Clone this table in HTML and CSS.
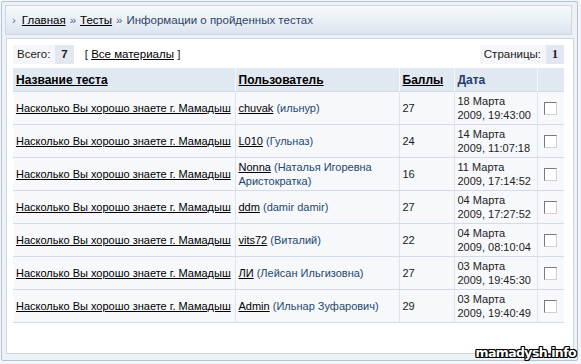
FILE: index.html
```html
<!DOCTYPE html>
<html>
<head>
<meta charset="utf-8">
<link rel="stylesheet" href="styles.css">
</head>
<body>
<div class="frame">
  <div class="crumbs">
    <span class="arrow">›</span>
    <a href="#">Главная</a> <span class="sep">»</span> <a href="#">Тесты</a> <span class="sep">»</span> <span class="here">Информации о пройденных тестах</span>
  </div>
  <div class="panel">
    <div class="toolbar">
      <div class="counter"><span class="lbl">Всего:</span><span class="num">7</span></div>
      <div class="all">[ <a href="#">Все материалы</a> ]</div>
      <div class="pages"><span class="lbl">Страницы:</span><span class="num pg">1</span></div>
    </div>
    <table class="grid">
      <colgroup>
        <col class="c1"><col class="c2"><col class="c3"><col class="c4"><col class="c5">
      </colgroup>
      <thead>
        <tr>
          <th><a href="#">Название теста</a></th>
          <th><a href="#">Пользователь</a></th>
          <th><a href="#">Баллы</a></th>
          <th class="date-h">Дата</th>
          <th></th>
        </tr>
      </thead>
      <tbody>
        <tr>
          <td class="nw"><a href="#">Насколько Вы хорошо знаете г. Мамадыш</a></td>
          <td><a href="#">chuvak</a> <span class="real">(ильнур)</span></td>
          <td>27</td>
          <td class="date">18 Марта<br>2009, 19:43:00</td>
          <td class="chk"><span class="box"></span></td>
        </tr>
        <tr>
          <td class="nw"><a href="#">Насколько Вы хорошо знаете г. Мамадыш</a></td>
          <td><a href="#">L010</a> <span class="real">(Гульназ)</span></td>
          <td>24</td>
          <td class="date">14 Марта<br>2009, 11:07:18</td>
          <td class="chk"><span class="box"></span></td>
        </tr>
        <tr>
          <td class="nw"><a href="#">Насколько Вы хорошо знаете г. Мамадыш</a></td>
          <td><a href="#">Nonna</a> <span class="real">(Наталья Игоревна</span><br><span class="real">Аристократка)</span></td>
          <td>16</td>
          <td class="date">11 Марта<br>2009, 17:14:52</td>
          <td class="chk"><span class="box"></span></td>
        </tr>
        <tr>
          <td class="nw"><a href="#">Насколько Вы хорошо знаете г. Мамадыш</a></td>
          <td><a href="#">ddm</a> <span class="real">(damir damir)</span></td>
          <td>27</td>
          <td class="date">04 Марта<br>2009, 17:27:52</td>
          <td class="chk"><span class="box"></span></td>
        </tr>
        <tr>
          <td class="nw"><a href="#">Насколько Вы хорошо знаете г. Мамадыш</a></td>
          <td><a href="#">vits72</a> <span class="real">(Виталий)</span></td>
          <td>22</td>
          <td class="date">04 Марта<br>2009, 08:10:04</td>
          <td class="chk"><span class="box"></span></td>
        </tr>
        <tr>
          <td class="nw"><a href="#">Насколько Вы хорошо знаете г. Мамадыш</a></td>
          <td><a href="#">ЛИ</a> <span class="real">(Лейсан Ильгизовна)</span></td>
          <td>27</td>
          <td class="date">03 Марта<br>2009, 19:45:30</td>
          <td class="chk"><span class="box"></span></td>
        </tr>
        <tr>
          <td class="nw"><a href="#">Насколько Вы хорошо знаете г. Мамадыш</a></td>
          <td><a href="#">Admin</a> <span class="real">(Ильнар Зуфарович)</span></td>
          <td>29</td>
          <td class="date">03 Марта<br>2009, 19:40:49</td>
          <td class="chk"><span class="box"></span></td>
        </tr>
      </tbody>
    </table>
  </div>
</div>
<div class="watermark">mamadysh.info</div>
</body>
</html>
```
FILE: styles.css
```css
html, body {
  margin: 0;
  padding: 0;
  background: #f3f5f8;
  width: 581px;
  height: 364px;
  overflow: hidden;
  font-family: "Liberation Sans", Arial, sans-serif;
  font-size: 11px;
  color: #1a1a1a;
}
a { color: #000; text-decoration: underline; }

.frame {
  position: relative;
  margin: 1px 3px 0 1px;
  height: 360px;
  border: 1px solid #b3c4d6;
  border-radius: 2px;
  background: #eef2f7;
  padding: 3px 3px 0 3px;
  box-sizing: border-box;
  display: flex;
  flex-direction: column;
  gap: 3px;
}
.crumbs {
  height: 30px;
  flex: none;
  box-sizing: border-box;
  border: 1px solid #c9d6e4;
  background: linear-gradient(#f7f9fc, #e9eff6 55%, #dbe4ef);
  display: flex;
  align-items: center;
  gap: 4px;
  padding-left: 6px;
  margin-right: 2px;
  font-size: 11.5px;
  color: #2b4466;
}
.crumbs .arrow { color: #5a6f8c; margin-right: 2px; }
.crumbs .sep { color: #4c6587; }
.crumbs .here { color: #2b4466; }

.panel {
  flex: 1;
  min-height: 0;
  background: #fff;
  border: 1px solid #c9d6e4;
  margin-left: 1px;
  margin-bottom: 6px;
  padding: 5px 9px 0 6px;
}
.toolbar {
  display: flex;
  align-items: center;
  height: 20px;
  margin-bottom: 4px;
  gap: 11px;
  font-size: 11.5px;
}
.counter, .pages {
  display: flex;
  height: 19px;
  align-items: stretch;
  background: #f4f6f9;
}
.counter .lbl, .pages .lbl {
  display: flex;
  align-items: center;
  padding: 0 5px 0 4px;
  color: #1a1a1a;
}
.counter .num, .pages .num {
  display: flex;
  align-items: center;
  padding: 0 6px;
  background: #e1e8f1;
  font-weight: bold;
}
.pages .pg { font-family: "Liberation Serif", serif; font-size: 12px; }
.all { color: #1a1a1a; }
.pages { margin-left: auto; }

.grid {
  border-collapse: collapse;
  width: 551px;
  table-layout: fixed;
  font-size: 11px;
}
.c1 { width: 222px; }
.c2 { width: 164px; }
.c3 { width: 55px; }
.c4 { width: 83px; }
.c5 { width: 27px; }
.grid th {
  background: #e0e8f1;
  height: 23px;
  text-align: left;
  padding: 0 3px;
  font-size: 12px;
  font-weight: bold;
  border-left: 1px solid #f4f7fb;
}
.grid th:first-child { border-left: none; }
.grid th.date-h { color: #1f3e6b; }
.grid td {
  background: #f6f8fb;
  height: 32px;
  padding: 0 3px;
  border-top: 1px solid #d3dce6;
  border-bottom: 1px solid #d3dce6;
  border-left: 1px solid #dde4ec;
  vertical-align: middle;
  line-height: 14px;
  color: #1a1a1a;
}
.grid td.nw { white-space: nowrap; }
.grid td:first-child { border-left: none; }
.grid td .real { color: #24486f; }
.grid td.date { color: #222; }
.grid td.chk { text-align: center; padding: 0; }
.box {
  display: inline-block;
  width: 11px;
  height: 11px;
  border: 1px solid #7a7a7a;
  border-right-color: #d0d0d0;
  border-bottom-color: #d0d0d0;
  background: #fff;
  vertical-align: middle;
}

.watermark {
  position: absolute;
  right: 5px;
  bottom: 4px;
  font-family: "DejaVu Sans", sans-serif;
  font-weight: bold;
  font-size: 12.5px;
  letter-spacing: -0.6px;
  color: #fff;
  text-shadow: -1px -1px 0 #000, 1px -1px 0 #000, -1px 1px 0 #000, 1px 1px 0 #000, 0 1px 0 #000, 0 -1px 0 #000, 1px 0 0 #000, -1px 0 0 #000;
}
```
